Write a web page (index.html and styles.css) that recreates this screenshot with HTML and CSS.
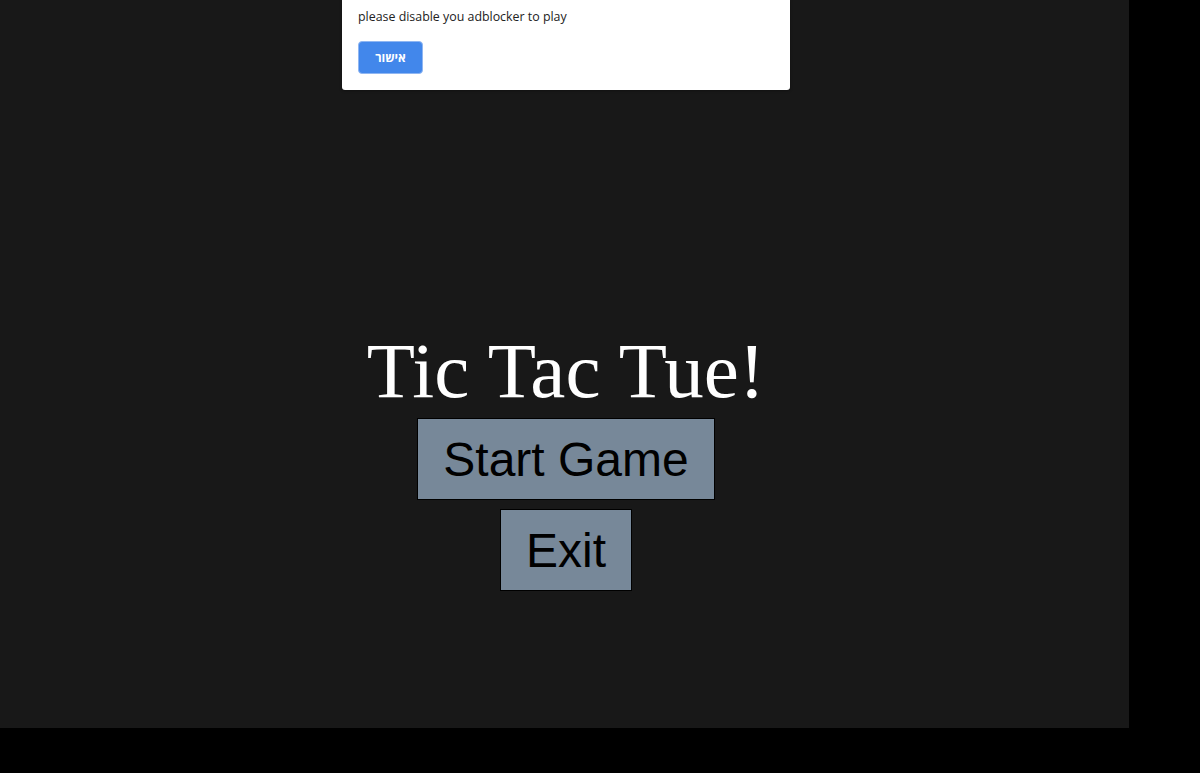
FILE: index.html
```html
<!DOCTYPE html>
<html lang="en">
<head>
<meta charset="utf-8">
<title>Tic Tac Tue!</title>
<link rel="stylesheet" href="styles.css">
</head>
<body>
  <main class="page">
    <h1 class="title">Tic Tac Tue!</h1>
    <button class="menu-btn">Start Game</button>
    <button class="menu-btn">Exit</button>
  </main>
  <div class="dialog">
    <p class="dialog-text">please disable you adblocker to play</p>
    <button class="dialog-ok" dir="rtl">אישור</button>
  </div>
</body>
</html>
```
FILE: styles.css
```css
html, body {
  margin: 0;
  padding: 0;
  background: #000;
}

body {
  width: 1200px;
  height: 773px;
  overflow: hidden;
  position: relative;
}

.page {
  width: 1129px;
  height: 728px;
  background: #181818;
  display: flex;
  flex-direction: column;
  align-items: center;
  padding: 326px 0 0 3px;
  box-sizing: border-box;
}

.title {
  margin: 0 0 2px;
  font-family: "Liberation Serif", "Times New Roman", serif;
  font-weight: normal;
  font-size: 79px;
  color: #fff;
}

.menu-btn {
  font-family: "Liberation Sans", Arial, sans-serif;
  font-size: 48px;
  color: #000;
  background: #778899;
  border: 1px solid #000;
  padding: 12.5px 25px;
  margin: 0 0 9px;
  line-height: normal;
}

.dialog {
  position: absolute;
  left: 342px;
  top: 0;
  width: 448px;
  height: 90px;
  background: #fff;
  border-radius: 0 0 3px 3px;
  box-sizing: border-box;
  padding: 8px 16px 0;
  box-shadow: 0 1px 3px rgba(0, 0, 0, 0.3);
}

.dialog-text {
  margin: 0;
  font-family: "Open Sans", "Noto Sans", sans-serif;
  font-size: 12.4px;
  color: #222;
}

.dialog-ok {
  margin-top: 16px;
  width: 65px;
  height: 33px;
  background: #4287eb;
  border: 1px solid #8fb6f2;
  border-radius: 4px;
  color: #fff;
  font-family: "Open Sans", "DejaVu Sans", sans-serif;
  font-weight: bold;
  font-size: 12px;
  padding: 0;
}
```
